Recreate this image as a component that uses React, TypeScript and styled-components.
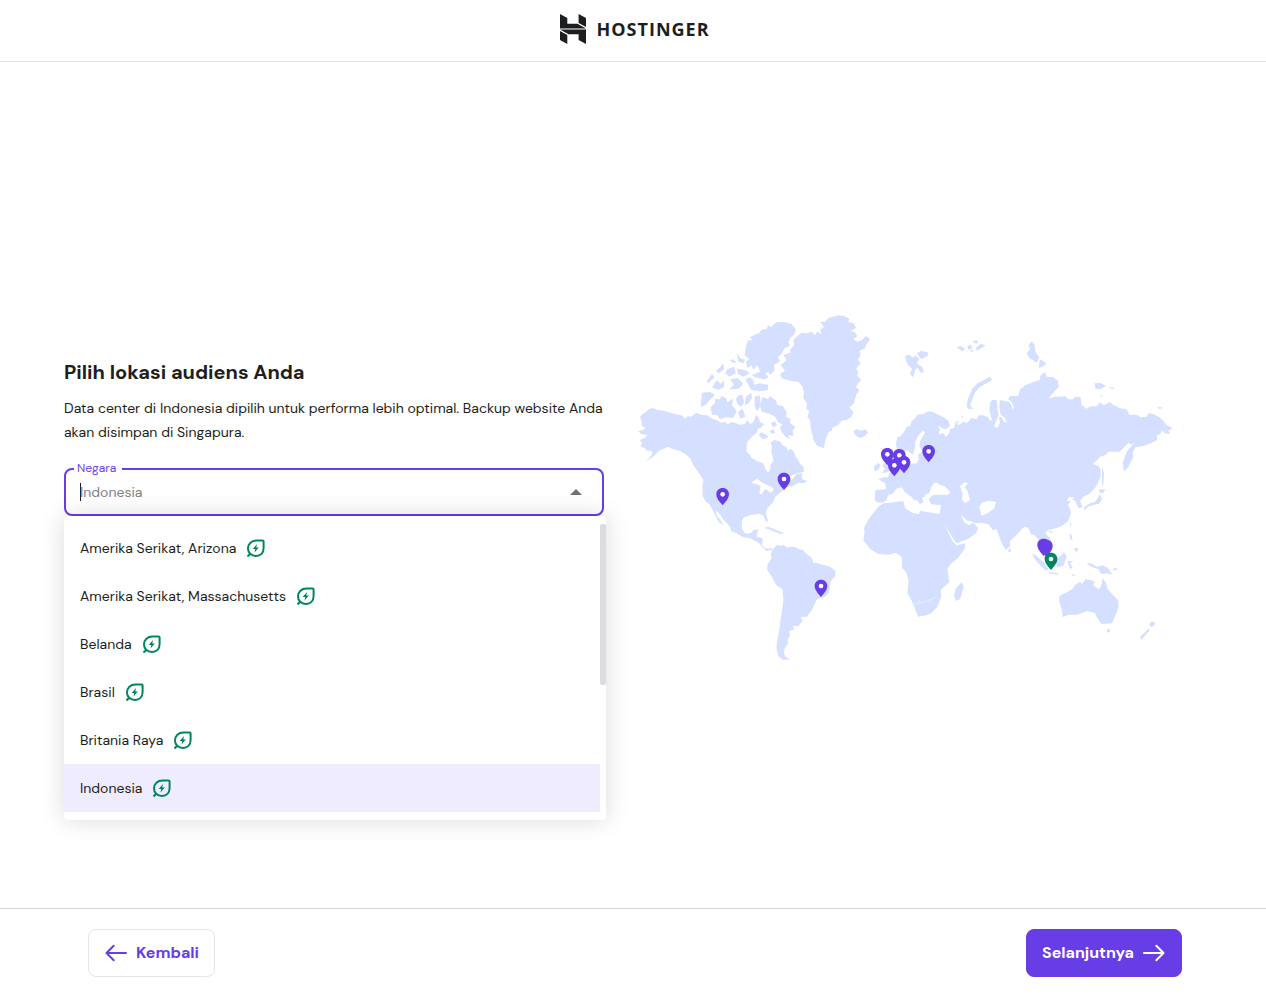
import React from "react";
import styled, { createGlobalStyle } from "styled-components";

const GlobalStyle = createGlobalStyle`
  *, *::before, *::after { box-sizing: border-box; }
  body {
    margin: 0;
    background: #ffffff;
    color: #1d1e20;
    font-family: "DM Sans", Inter, "Liberation Sans", sans-serif;
    font-size: 14px;
    line-height: 24px;
  }
`;

const Page = styled.div`
  display: flex;
  flex-direction: column;
  min-height: 100vh;
`;

const Header = styled.header`
  display: flex;
  align-items: center;
  justify-content: center;
  height: 62px;
  padding: 0 0 4px 4px;
  border-bottom: 1px solid #dfe0e3;
`;

const Brand = styled.a`
  display: flex;
  align-items: center;
  gap: 10px;
  color: #1d1e20;
  font-family: "Open Sans", "Noto Sans", sans-serif;
  font-size: 18px;
  font-weight: 700;
  letter-spacing: 1px;
  text-decoration: none;
`;

const Content = styled.main`
  flex: 1;
  display: grid;
  grid-template-columns: minmax(0, 1fr) minmax(0, 1fr);
  align-items: center;
  gap: 32px;
  padding: 6px 90px 0 64px;
`;

const Panel = styled.section`
  padding-bottom: 102px;
`;

const Title = styled.h1`
  margin: 0 0 10px;
  font-size: 20px;
  font-weight: 700;
  line-height: 28px;
`;

const Description = styled.p`
  margin: 0 0 24px;
`;

const Field = styled.div`
  position: relative;
`;

const Control = styled.div`
  display: flex;
  align-items: center;
  height: 48px;
  padding: 0 20px 0 14px;
  border: 2px solid #673de6;
  border-radius: 8px;
`;

const FieldLabel = styled.label`
  position: absolute;
  top: -8px;
  left: 10px;
  padding: 0 6px 0 3px;
  background: #ffffff;
  color: #673de6;
  font-size: 12px;
  line-height: 16px;
`;

const Caret = styled.span`
  width: 1px;
  height: 18px;
  margin-right: -1px;
  background: #1d1e20;
`;

const CountryInput = styled.input`
  flex: 1;
  min-width: 0;
  padding: 0;
  border: 0;
  outline: 0;
  background: transparent;
  color: #1d1e20;
  caret-color: transparent;
  font: inherit;
  &::placeholder { color: #808184; opacity: 1; }
`;

const Dropdown = styled.div`
  position: absolute;
  top: 100%;
  left: 0;
  right: -2px;
  display: flex;
  padding: 8px 0;
  border-radius: 4px;
  background: #ffffff;
  box-shadow: 0 0 24px rgba(0, 0, 0, 0.15);
`;

const Options = styled.ul`
  flex: 1;
  margin: 0;
  padding: 0;
  list-style: none;
`;

const Option = styled.li<{ $selected: boolean }>`
  display: flex;
  align-items: center;
  gap: 8px;
  height: 48px;
  padding: 0 16px;
  background: ${({ $selected }) => ($selected ? "#f0ecff" : "transparent")};
`;

const ScrollThumb = styled.span`
  width: 6px;
  height: 161px;
  border-radius: 2px;
  background: #dadce0;
`;

const Map = styled.svg`
  display: block;
  width: 100%;
  height: auto;
`;

const Footer = styled.footer`
  display: flex;
  align-items: center;
  justify-content: space-between;
  height: 96px;
  padding: 0 84px 8px 88px;
  border-top: 1px solid #d5d6da;
`;

const Button = styled.button<{ $primary?: boolean }>`
  display: flex;
  align-items: center;
  gap: 8px;
  height: 48px;
  padding: 0 15px;
  border: 1px solid ${({ $primary }) => ($primary ? "#673de6" : "#e4e5e9")};
  border-radius: 8px;
  background: ${({ $primary }) => ($primary ? "#673de6" : "#ffffff")};
  color: ${({ $primary }) => ($primary ? "#ffffff" : "#673de6")};
  font: inherit;
  font-size: 16px;
  font-weight: 700;
  cursor: pointer;
`;

const LogoMark = () => (
  <svg width="26" height="30" viewBox="0 0 26 30" fill="currentColor" aria-hidden="true">
    <path d="M0 0 7.300 4V9.800H17.500L26 14.400H0ZM18.600 0 26 4V13L18.600 9Z" />
    <path d="M26 30 18.600 26V20.200H8.500L0 15.600H26ZM0 17 7.300 21V30L0 26Z" />
  </svg>
);

const LeafIcon = () => (
  <svg width="24" height="24" viewBox="0 0 24 24" fill="none" aria-hidden="true">
    <path
      d="M3.500 20.500 6.200 17.800C4.800 16.400 4 14.700 4 12.500 4 7.600 7.600 4.500 12.500 4.500H18.500Q19.600 4.500 19.600 5.600V12c0 4.900-3.100 8-7.600 8-2.400 0-4.300-.7-5.800-2.200"
      stroke="#00855f"
      strokeWidth="2"
      strokeLinejoin="round"
    />
    <path d="m13 8-4.300 5h2.500l-.7 3.400 4.300-5h-2.500z" fill="#00855f" />
  </svg>
);

const ArrowIcon = ({ back = false }: { back?: boolean }) => (
  <svg
    width="24"
    height="24"
    viewBox="0 0 24 24"
    fill="none"
    stroke="currentColor"
    strokeWidth="2"
    strokeLinecap="round"
    strokeLinejoin="round"
    aria-hidden="true"
  >
    <path d={back ? "M22 12H2.500m7.200-7.200L2.500 12l7.200 7.200" : "M2 12h19.500m-7.200-7.200 7.200 7.200-7.200 7.200"} />
  </svg>
);

const AMERICAS = [
  // Alaska, Canada, United States and Central America
  "M60 352 68 342 78 336 86 328 100 324 112 330 130 332 165 342 185 346 195 356 204 348 214 350 228 338 244 345 262 346 276 356 290 360 304 368 318 366 322 374 332 366 345 368 360 374 375 372 382 360 390 372 400 366 408 346 416 352 420 366 432 372 422 384 414 386 410 398 398 408 386 420 380 430 380 456 390 464 395 474 412 484 430 490 436 506 444 518 450 510 452 494 460 484 458 470 454 456 456 440 452 428 462 420 480 424 488 436 500 442 502 452 514 446 522 456 527 470 535 480 540 492 550 500 552 516 536 518 520 524 505 530 515 540 530 522 545 520 546 538 562 544 550 550 535 548 515 560 508 558 495 566 480 578 466 590 458 608 448 618 440 628 437 640 443 658 442 668 435 660 430 646 420 642 405 643 390 646 372 652 366 662 365 685 372 697 380 702 394 698 400 690 416 688 412 698 410 710 422 713 429 718 426 735 434 744 445 746 455 744 458 752 450 750 440 753 426 740 418 730 404 722 390 714 370 712 350 700 334 694 330 682 320 668 308 656 300 642 288 632 290 648 300 658 310 676 298 668 290 654 278 630 268 612 256 604 248 588 247 560 250 540 240 524 230 510 218 492 210 474 195 462 178 452 160 448 145 440 132 446 120 450 108 462 94 474 72 488 88 474 98 460 94 452 80 452 74 444 62 440 66 430 60 420 78 412 80 404 64 402 54 394 70 390 76 382 64 378 66 368Z",
  // South America
  "M460 746 472 735 485 738 490 734 500 742 525 740 535 748 548 750 560 762 575 774 580 788 594 790 610 795 630 800 646 812 646 828 632 844 630 860 627 878 615 890 598 895 590 900 582 915 574 932 560 950 542 950 548 962 535 978 518 978 522 988 508 994 510 1008 502 1020 505 1030 494 1045 492 1062 498 1072 510 1078 490 1080 475 1068 470 1048 470 1030 478 990 482 960 485 940 490 900 488 868 468 855 455 830 442 810 442 795 455 775 452 762Z",
  // Greenland
  "M485 235 510 242 535 246 548 260 552 280 550 295 562 312 558 325 568 335 562 350 570 360 572 385 578 405 580 420 592 438 612 444 616 420 620 410 626 396 635 392 638 382 655 375 664 362 680 360 695 350 700 336 688 322 702 310 708 286 718 270 708 262 714 248 724 240 712 228 714 215 708 205 722 190 714 180 722 165 718 152 734 146 738 135 750 118 738 108 726 120 712 125 700 118 712 108 704 96 690 94 708 84 702 70 685 66 688 56 672 48 655 46 640 50 625 54 615 66 600 66 612 80 600 90 605 104 592 94 585 106 575 95 560 100 545 98 530 110 520 120 522 135 510 150 512 158 490 165 500 180 482 195 495 212 480 222Z",
  // Ellesmere and neighbouring Arctic islands
  "M378 138 385 120 398 122 390 112 405 104 418 100 424 90 440 86 444 76 454 82 460 74 470 67 492 66 515 72 528 90 522 104 512 112 505 128 510 138 494 144 486 160 474 172 480 184 462 195 464 210 452 225 444 216 436 220 446 232 435 238 405 232 395 225 420 215 412 195 400 210 395 196 382 204 378 185 388 176 374 166Z",
  "M330 180 342 178 348 188 338 188ZM352 160 360 174 376 180 370 190 354 184ZM300 202 310 190 312 208 296 220 288 212ZM322 208 342 200 348 220 328 230 316 220ZM260 244 276 222 284 232 264 250ZM276 262 290 240 302 252 312 240 312 262 294 270ZM330 238 354 234 370 252 356 266 328 268 342 254ZM376 238 388 232 400 240 402 254 420 250 444 254 444 270 420 274 395 270 386 256ZM350 206 376 210 390 220 370 230 354 222Z",
  "M246 278 270 276 284 284 268 302 256 316 242 320ZM272 322 286 308 284 298 300 298 304 288 318 294 322 306 340 296 336 316 350 332 340 354 318 352 300 358 292 346 276 344ZM348 296 358 284 368 286 372 310 362 320 352 312ZM378 290 394 278 396 294 384 312 374 314ZM404 290 420 286 422 316 412 334 404 320ZM354 336 368 326 376 350 360 356Z",
  "M428 290 444 298 450 288 468 302 472 316 488 318 500 336 498 350 512 358 510 370 526 380 518 392 520 408 504 406 510 418 494 408 484 394 480 382 488 374 474 366 466 350 444 340 426 336 420 318ZM416 406 424 396 438 404 446 412 430 418ZM452 370 464 364 472 376 460 382ZM450 392 460 388 466 398 454 402Z",
  // Cuba and the Caribbean
  "M432 684 444 680 460 686 474 692 492 700 482 702 466 696 446 688Z",
  // Iceland
  "M700 394 710 388 722 392 736 388 744 396 738 406 722 414 708 408Z",
];

const EASTERN = [
  // Europe and Asia
  "M108 430 112 412 122 408 130 398 140 380 150 378 156 362 165 355 172 344 190 342 205 334 218 336 235 344 250 352 265 362 270 378 258 388 246 384 232 376 240 388 236 402 250 400 258 410 268 400 270 388 282 384 288 364 294 376 310 366 322 368 335 354 350 358 356 346 370 346 384 352 390 362 396 360 388 332 390 310 396 300 410 300 412 325 416 345 410 360 402 378 414 384 420 366 416 352 424 350 432 366 440 368 434 352 422 345 418 320 420 300 432 302 448 306 456 318 456 330 462 322 454 306 444 296 450 288 475 288 480 268 496 256 520 246 540 240 540 228 555 216 560 230 580 232 594 242 596 260 580 278 565 296 584 290 600 290 615 288 625 298 640 298 645 290 662 292 664 316 680 326 690 320 712 318 720 306 730 316 750 306 760 315 778 324 800 328 808 345 830 344 842 352 860 350 865 340 880 342 898 352 910 362 918 374 938 385 925 392 930 402 915 400 905 390 902 402 890 406 892 420 872 430 850 438 826 442 818 456 820 470 805 500 792 515 788 488 800 455 825 425 812 435 806 428 790 444 778 455 745 455 738 464 720 470 710 482 698 492 716 498 722 510 722 530 708 560 690 580 668 592 660 602 668 622 656 625 646 604 636 598 644 592 626 592 620 604 632 602 624 616 632 630 632 642 625 662 616 670 605 678 590 684 575 688 564 690 556 700 570 715 576 732 562 745 548 735 550 750 560 766 548 758 538 740 535 718 522 704 514 704 506 686 498 680 488 684 475 700 460 714 450 722 450 738 438 750 426 732 414 700 410 688 398 690 385 672 362 668 346 670 332 664 322 662 304 645 312 665 326 676 338 668 355 684 348 700 325 716 290 730 282 720 270 700 250 670 238 650 240 636 243 615 228 614 212 612 206 596 218 586 240 584 264 584 271 576 255 562 246 560 240 568 230 560 236 550 224 548 214 560 208 580 196 582 196 590 186 592 190 606 180 612 170 600 160 590 145 578 136 564 144 560 158 572 174 592 164 602 154 590 134 576 126 562 108 566 100 580 84 586 80 600 68 608 50 607 44 600 46 570 78 568 76 550 55 538 70 532 84 532 88 520 105 508 118 498 128 484 132 470 138 486 150 492 170 490 176 480 174 464 186 456 210 452 184 450 178 436 182 420 196 396 188 392 176 406 166 424 164 448 158 464 142 450 130 460 112 456Z",
  // Great Britain and Ireland
  "M68 452 84 446 86 466 92 480 96 506 84 516 66 520 74 506 66 496 78 488 70 470ZM42 500 54 488 62 496 54 510 42 514Z",
  // Africa
  "M55 620 70 610 90 608 108 606 130 603 135 624 158 638 176 643 182 632 200 636 225 640 242 642 246 660 256 680 266 700 278 724 290 736 316 730 314 746 294 774 272 792 262 808 268 846 242 870 244 890 232 920 214 940 200 946 174 950 162 918 154 900 142 880 146 840 138 816 126 804 126 776 122 768 106 758 88 764 54 762 30 746 10 720 14 694 12 684 26 658 42 636Z",
  // Madagascar and Sri Lanka
  "M306 846 311 862 300 898 288 902 282 886 288 864ZM448 744 454 750 450 758 444 754Z",
  // Svalbard, Franz Josef Land, Novaya Zemlya, Severnaya Zemlya
  "M134 168 148 164 160 174 164 166 178 176 170 190 186 200 192 216 182 218 174 204 166 208 160 232 150 222 156 206 142 192ZM170 160 184 152 206 158 202 168 184 178ZM290 142 302 138 316 146 306 154ZM322 138 332 134 338 144 326 150ZM338 124 350 120 354 130 342 130ZM348 142 362 132 378 136 362 146 350 152ZM330 150 340 150 336 158Z",
  "M320 318 324 296 336 268 352 250 372 240 390 230 396 240 372 254 356 264 344 280 336 300 330 316 340 328 324 326ZM500 160 510 148 506 134 516 124 524 136 526 156 538 172 530 188 518 180 508 174ZM540 178 558 188 552 198 536 204ZM704 250 720 248 738 258 720 268 706 266ZM744 260 764 264 758 268ZM720 286 730 288 724 292ZM890 322 908 322 900 328ZM288 366 294 362 296 370ZM304 348 310 350 306 356Z",
  // Japan, Sakhalin, Philippines
  "M726 500 732 520 730 550 726 560ZM718 568 736 568 730 578 718 580ZM720 582 726 598 716 612 700 614 684 620 674 632 672 622 690 610 706 606ZM630 670 634 672 630 684ZM628 702 634 704 638 722 630 716ZM642 744 654 744 652 756 644 752ZM564 694 578 694 574 700Z",
  // Indonesia, Borneo and New Guinea
  "M516 760 530 768 550 786 566 808 558 812 540 796 524 776ZM564 816 594 820 596 824 566 820ZM590 776 606 764 612 756 620 770 610 798 592 802 586 788ZM622 784 640 784 630 790 638 804 630 806ZM634 822 650 826 638 828ZM680 790 694 790 710 800 728 796 744 804 758 824 740 820 724 822 716 808 694 800ZM756 808 774 802 766 812Z",
  // Australia, Tasmania and New Zealand
  "M598 888 622 876 638 866 646 854 660 846 666 852 676 838 692 840 704 844 700 856 716 868 724 858 728 834 738 848 742 866 756 882 774 900 776 920 768 942 756 970 724 972 712 954 704 938 680 934 652 944 626 944 608 952 606 930 598 906ZM740 988 752 988 748 998 742 996ZM870 968 880 964 886 972 876 982 868 976ZM864 986 870 990 852 1010 844 1020 840 1010 852 1000Z",
];

const GREAT_LAKES =
  "M394 548 410 536 422 544 430 550 444 556 456 562 462 570 452 578 444 572 436 566 426 582 418 582 422 558 408 552Z";

// Black Sea, Caspian Sea and the Tibetan gap
const INLAND_SEAS = [
  "M208 580 216 560 226 550 244 556 256 560 270 578 248 584 230 578 216 588Z",
  "M300 558 316 546 324 550 314 562 322 572 330 600 314 610 306 598 308 580Z",
  "M358 620 366 608 388 602 408 606 402 626 382 640 364 648Z",
];

type PinProps = { x: number; y: number; color?: string; solid?: boolean };

const Pin = ({ x, y, color = "#673de6", solid = false }: PinProps) => (
  <g transform={`translate(${x} ${y})`}>
    <path d="M0 0C-8-10-19-20-19-33-19-44-11-52 0-52S19-44 19-33C19-20 8-10 0 0Z" fill={color} />
    {!solid && <circle cy="-33" r="7" fill="#fff" />}
  </g>
);

const PINS: PinProps[] = [
  { x: 308, y: 616 },
  { x: 492, y: 570 },
  { x: 603, y: 891 },
  { x: 802, y: 496 },
  { x: 838, y: 499 },
  { x: 852, y: 520 },
  { x: 823, y: 529 },
  { x: 926, y: 487 },
  { x: 1271, y: 768, solid: true },
  { x: 1279, y: 771, solid: true },
  { x: 1293, y: 810, color: "#00855f" },
];

const WorldMap = () => (
  <Map viewBox="48 36 1620 1056" role="img" aria-label="Data center">
    <g fill="#d5dfff">
      {AMERICAS.map((d) => <path key={d} d={d} />)}
      <path d={GREAT_LAKES} fill="#fff" />
      <g transform="translate(720 0)">
        {EASTERN.map((d) => <path key={d} d={d} />)}
        {INLAND_SEAS.map((d) => <path key={d} d={d} fill="#fff" />)}
        <path d="M158 914 174 910 180 900M176 912 206 902 230 890" fill="none" stroke="#f2f5ff" strokeWidth="2" />
      </g>
    </g>
    {PINS.map((pin) => <Pin key={`${pin.x}-${pin.y}`} {...pin} />)}
  </Map>
);

const COUNTRIES = [
  "Amerika Serikat, Arizona",
  "Amerika Serikat, Massachusetts",
  "Belanda",
  "Brasil",
  "Britania Raya",
  "Indonesia",
];

export default function App() {
  return (
    <Page>
      <GlobalStyle />
      <Header>
        <Brand href="#">
          <LogoMark />
          HOSTINGER
        </Brand>
      </Header>
      <Content>
        <Panel>
          <Title>Pilih lokasi audiens Anda</Title>
          <Description>
            Data center di Indonesia dipilih untuk performa lebih optimal. Backup website Anda akan disimpan di Singapura.
          </Description>
          <Field>
            <Control>
              <Caret />
              <CountryInput
                id="country"
                role="combobox"
                aria-expanded="true"
                aria-controls="countries"
                placeholder="Indonesia"
              />
              <svg width="12" height="6" viewBox="0 0 12 6" aria-hidden="true">
                <path d="M0 6 6 0l6 6z" fill="#6f7073" />
              </svg>
            </Control>
            <FieldLabel htmlFor="country">Negara</FieldLabel>
            <Dropdown>
              <Options id="countries" role="listbox">
                {COUNTRIES.map((country) => (
                  <Option
                    key={country}
                    role="option"
                    aria-selected={country === "Indonesia"}
                    $selected={country === "Indonesia"}
                  >
                    {country}
                    <LeafIcon />
                  </Option>
                ))}
              </Options>
              <ScrollThumb />
            </Dropdown>
          </Field>
        </Panel>
        <WorldMap />
      </Content>
      <Footer>
        <Button type="button">
          <ArrowIcon back />
          Kembali
        </Button>
        <Button type="button" $primary>
          Selanjutnya
          <ArrowIcon />
        </Button>
      </Footer>
    </Page>
  );
}
